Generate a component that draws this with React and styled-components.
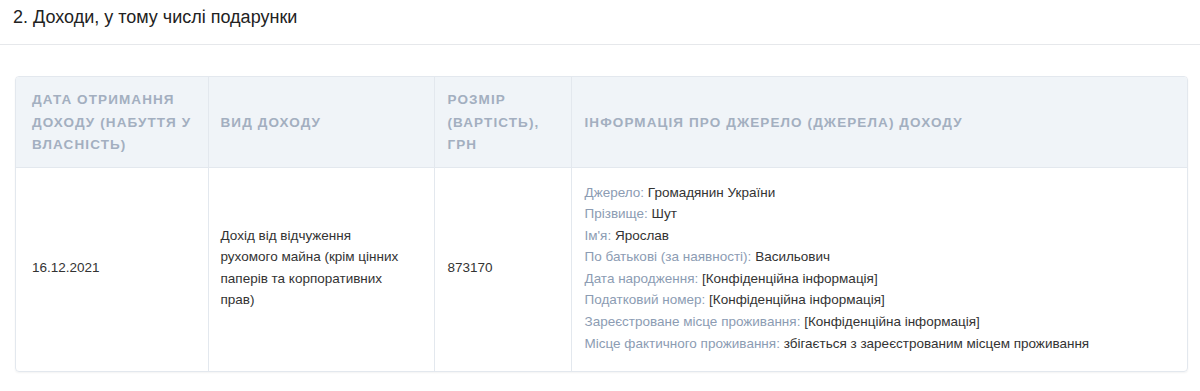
import styled, { createGlobalStyle } from "styled-components";

const GlobalStyle = createGlobalStyle`
  body {
    margin: 0;
    background: #ffffff;
    font-family: "Liberation Sans", Arial, sans-serif;
    color: #333333;
  }
`;

const columns = [
  { key: "date", title: "Дата отримання доходу (набуття у власність)", width: 192, pad: 16 },
  { key: "kind", title: "Вид доходу", width: 226, pad: 12 },
  { key: "amount", title: "Розмір (вартість), грн", width: 137, pad: 13 },
  { key: "source", title: "Інформація про джерело (джерела) доходу", pad: 13 }
];

const sourceInfo = [
  ["Джерело", "Громадянин України"],
  ["Прізвище", "Шут"],
  ["Ім'я", "Ярослав"],
  ["По батькові (за наявності)", "Васильович"],
  ["Дата народження", "[Конфіденційна інформація]"],
  ["Податковий номер", "[Конфіденційна інформація]"],
  ["Зареєстроване місце проживання", "[Конфіденційна інформація]"],
  ["Місце фактичного проживання", "збігається з зареєстрованим місцем проживання"]
];

export default function App() {
  return (
    <>
      <GlobalStyle />
      <Section>
        <SectionTitle>2. Доходи, у тому числі подарунки</SectionTitle>
        <TableCard>
          <Table>
            <colgroup>
              {columns.map((col) => (
                <col key={col.key} style={col.width ? { width: col.width } : undefined} />
              ))}
            </colgroup>
            <thead>
              <tr>
                {columns.map((col) => (
                  <HeadCell key={col.key} $pad={col.pad}>
                    {col.title}
                  </HeadCell>
                ))}
              </tr>
            </thead>
            <tbody>
              <tr>
                <Cell $pad={16}>16.12.2021</Cell>
                <Cell $pad={12} $padRight={22}>
                  Дохід від відчуження рухомого майна (крім цінних паперів та корпоративних прав)
                </Cell>
                <Cell $pad={13}>873170</Cell>
                <Cell $pad={13}>
                  {sourceInfo.map(([label, value]) => (
                    <InfoLine key={label}>
                      <Label>{label}:</Label> {value}
                    </InfoLine>
                  ))}
                </Cell>
              </tr>
            </tbody>
          </Table>
        </TableCard>
      </Section>
    </>
  );
}

const Section = styled.section`
  width: 1200px;
  padding-bottom: 18px;
`;

const SectionTitle = styled.h2`
  margin: 0;
  height: 45px;
  padding: 4px 13px 0;
  box-sizing: border-box;
  border-bottom: 1px solid #e6e8eb;
  font-size: 18px;
  font-weight: 400;
  line-height: 26px;
  color: #222222;
`;

const TableCard = styled.div`
  margin: 31px 12px 0 15px;
  border: 1px solid #e3e8ee;
  border-radius: 4px;
  overflow: hidden;
  box-shadow: 0 1px 2px rgba(0, 0, 0, 0.05);
`;

const Table = styled.table`
  width: 100%;
  table-layout: fixed;
  border-collapse: collapse;
`;

const HeadCell = styled.th`
  height: 90px;
  padding: 12px 12px 10px ${(p) => p.$pad}px;
  box-sizing: border-box;
  background: #f0f4f8;
  border-bottom: 1px solid #e3e8ee;
  text-align: left;
  vertical-align: middle;
  font-size: 13.5px;
  font-weight: 700;
  line-height: 22.5px;
  letter-spacing: 1.1px;
  text-transform: uppercase;
  color: #a3afc0;

  & + & {
    border-left: 1px solid #e3e8ee;
  }
`;

const Cell = styled.td`
  padding: 14px ${(p) => p.$padRight ?? 12}px 17px ${(p) => p.$pad}px;
  vertical-align: middle;
  font-size: 13.5px;
  line-height: 21.6px;
  color: #333333;

  & + & {
    border-left: 1px solid #e3e8ee;
  }
`;

const InfoLine = styled.div`
  white-space: nowrap;
`;

const Label = styled.span`
  color: #8c9cb3;
`;
